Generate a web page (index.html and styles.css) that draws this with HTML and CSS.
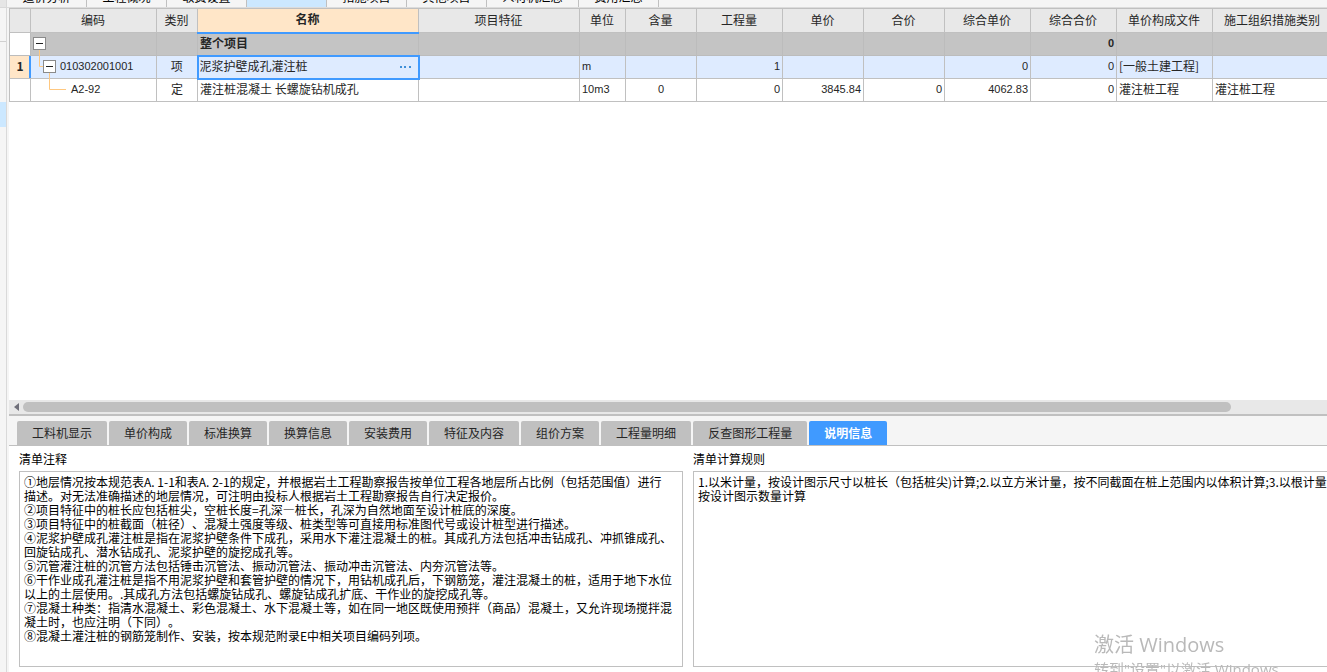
FILE: index.html
```html
<!DOCTYPE html>
<html lang="zh-CN">
<head>
<meta charset="utf-8">
<title>分部分项</title>
<link rel="stylesheet" href="styles.css">
</head>
<body>
<div class="app">
  <aside class="rail"><div class="rail-head"></div><div class="rail-top"></div><div class="rail-mid"></div><div class="rail-active"></div></aside>
  <main class="main">
    <nav class="modules">
      <button type="button">造价分析</button><button type="button">工程概况</button><button type="button">取费设置</button><button type="button" class="current" aria-label="分部分项"></button><button type="button">措施项目</button><button type="button">其他项目</button><button type="button">人材机汇总</button><button type="button">费用汇总</button>
    </nav>
    <section class="sheet">
      <table class="grid">
        <colgroup><col class="c-idx"><col class="c-code"><col class="c-kind"><col class="c-name"><col class="c-feat"><col class="c-unit"><col class="c-cont"><col class="c-86"><col class="c-81"><col class="c-81"><col class="c-86"><col class="c-86"><col class="c-file"><col class="c-org"></colgroup>
        <thead>
          <tr><th></th><th>编码</th><th>类别</th><th class="picked">名称</th><th>项目特征</th><th>单位</th><th>含量</th><th>工程量</th><th>单价</th><th>合价</th><th>综合单价</th><th>综合合价</th><th>单价构成文件</th><th>施工组织措施类别</th></tr>
        </thead>
        <tbody>
          <tr class="total">
            <td class="idx"></td>
            <td class="tree"><div class="node"><button type="button" class="toggle" aria-label="折叠整个项目"></button></div></td>
            <td></td><td>整个项目</td><td></td><td></td><td></td><td></td><td></td><td></td><td></td><td class="num">0</td><td></td><td></td>
          </tr>
          <tr class="selected">
            <td class="idx">1</td>
            <td class="tree"><div class="node level1"><svg class="branch" width="9" height="17" viewBox="0 0 9 17"><path d="M.5 0V16.500H4" /></svg><button type="button" class="toggle" aria-label="折叠清单"></button><span class="digits">010302001001</span></div></td>
            <td class="mid">项</td>
            <td class="edit"><div class="editor"><input type="text" aria-label="名称" value="泥浆护壁成孔灌注桩"><button type="button" class="more" aria-label="更多"><svg width="12" height="2" viewBox="0 0 12 2"><path d="M0 0h2v2H0zM4 0h2v2H4zM9 0h2v2H9z"/></svg></button></div></td>
            <td></td><td class="digits">m</td><td></td><td class="num">1</td><td></td><td></td><td class="num">0</td><td class="num">0</td><td>[一般土建工程]</td><td></td>
          </tr>
          <tr>
            <td class="idx"></td>
            <td class="tree"><div class="node level2"><svg class="branch" width="17" height="17" viewBox="0 0 17 17"><path d="M.5 0V16.500H17" /></svg><span class="digits">A2-92</span></div></td>
            <td class="mid">定</td><td>灌注桩混凝土 长螺旋钻机成孔</td><td></td><td class="digits">10m3</td><td class="digits mid">0</td><td class="num">0</td><td class="num">3845.84</td><td class="num">0</td><td class="num">4062.83</td><td class="num">0</td><td>灌注桩工程</td><td>灌注桩工程</td>
          </tr>
        </tbody>
      </table>
    </section>
    <div class="scroller"><svg width="5" height="8" viewBox="0 0 5 8"><path d="M5 0v8L0 4z"/></svg><div class="thumb"></div></div>
    <section class="detail">
      <nav class="tabs">
        <button type="button">工料机显示</button><button type="button">单价构成</button><button type="button">标准换算</button><button type="button">换算信息</button><button type="button">安装费用</button><button type="button">特征及内容</button><button type="button">组价方案</button><button type="button">工程量明细</button><button type="button">反查图形工程量</button><button type="button" class="current">说明信息</button>
      </nav>
      <div class="notes">
        <div class="note">
          <label for="note">清单注释</label>
          <textarea id="note" readonly wrap="off">①地层情况按本规范表A. 1-1和表A. 2-1的规定，并根据岩土工程勘察报告按单位工程各地层所占比例（包括范围值）进行
描述。对无法准确描述的地层情况，可注明由投标人根据岩土工程勘察报告自行决定报价。
②项目特征中的桩长应包括桩尖，空桩长度=孔深—桩长，孔深为自然地面至设计桩底的深度。
③项目特征中的桩截面（桩径）、混凝土强度等级、桩类型等可直接用标准图代号或设计桩型进行描述。
④泥浆护壁成孔灌注桩是指在泥浆护壁条件下成孔，采用水下灌注混凝土的桩。其成孔方法包括冲击钻成孔、冲抓锥成孔、
回旋钻成孔、潜水钻成孔、泥浆护壁的旋挖成孔等。
⑤沉管灌注桩的沉管方法包括锤击沉管法、振动沉管法、振动冲击沉管法、内夯沉管法等。
⑥干作业成孔灌注桩是指不用泥浆护壁和套管护壁的情况下，用钻机成孔后，下钢筋笼，灌注混凝土的桩，适用于地下水位
以上的土层使用。.其成孔方法包括螺旋钻成孔、螺旋钻成孔扩底、干作业的旋挖成孔等。
⑦混凝土种类：指清水混凝土、彩色混凝土、水下混凝土等，如在同一地区既使用预拌（商品）混凝土，又允许现场搅拌混
凝土时，也应注明（下同）。
⑧混凝土灌注桩的钢筋笼制作、安装，按本规范附录E中相关项目编码列项。</textarea>
        </div>
        <div class="note">
          <label for="rule">清单计算规则</label>
          <textarea id="rule" readonly wrap="off">1.以米计量，按设计图示尺寸以桩长（包括桩尖)计算;2.以立方米计量，按不同截面在桩上范围内以体积计算;3.以根计量，
按设计图示数量计算</textarea>
        </div>
      </div>
    </section>
  </main>
</div>
<div class="watermark"><p class="wm-title">激活 Windows</p><p class="wm-sub">转到"设置"以激活 Windows。</p></div>
</body>
</html>
```
FILE: styles.css
```css
* { box-sizing: border-box; }
body {
  margin: 0;
  overflow: hidden;
  background: #fff;
  color: #262626;
  font: 12px/14px "Noto Sans CJK SC", sans-serif;
  text-spacing-trim: space-all;
}
button, input, textarea { font: inherit; color: inherit; margin: 0; padding: 0; border: 0; background: none; border-radius: 0; }

.app { display: flex; height: 100vh; background: #f5f5f5; }
.rail { flex: 0 0 7px; display: flex; flex-direction: column; border-right: 1px solid #d9d9d9; }
.rail-head { height: 8px; background: #e6e6e6; border-bottom: 1px solid #d9d9d9; }
.rail-top { height: 34px; border-bottom: 1px solid #d0d0d0; }
.rail-mid { height: 60px; }
.rail-active { height: 25px; background: #cce8ff; }
.main { flex: 1; min-width: 0; display: flex; flex-direction: column; }

.modules { flex: none; height: 8px; display: flex; align-items: flex-end; overflow: hidden; border-bottom: 1px solid #dcdcdc; }
.modules button { flex: none; height: 20px; border-right: 1px solid #c0c0c0; line-height: 14px; width: 80px; white-space: nowrap; color: #000; }
.modules button:nth-child(7) { width: 92px; }
.modules .current { background: #cce8ff; }

.sheet { flex: 1; min-height: 0; margin-left: 2px; overflow: hidden; background: #fff; }
.grid { width: 1324px; table-layout: fixed; border-collapse: collapse; }
.c-idx { width: 21px; } .c-code { width: 126px; } .c-kind { width: 41px; } .c-name { width: 221px; }
.c-feat { width: 161px; } .c-unit { width: 46px; } .c-cont { width: 71px; }
.c-86 { width: 86px; } .c-81 { width: 81px; } .c-file { width: 96px; } .c-org { width: 120px; }
.grid th, .grid td { height: 23px; padding: 0 2px 2px; border: 1px solid #c0c0c0; white-space: nowrap; line-height: 14px; text-align: left; overflow: hidden; }
.grid th { height: 24px; background: #e8e8e8; font-weight: 400; text-align: center; padding: 0 1px 2px 0; }
.grid th.picked { background: #ffe6c8; font-weight: 700; border-bottom: 2px solid #409aff; }
.grid .total td { background: #c4c4c4; font-weight: 700; border-color: #bcbcbc; }
.grid .selected td { background: #deebff; }
.grid .total .idx { background: #fff; }
.grid .selected .idx { background: #ffe6c8; border-right-color: #409aff; box-shadow: inset -1px 0 #409aff; }
.grid .idx { text-align: center; font-weight: 700; }
.grid .mid { text-align: center; }
.grid .num { text-align: right; }
.grid .num, .digits { font-family: "Liberation Sans", sans-serif; font-size: 11px; }
.grid .tree { padding: 0 2px 2px; overflow: visible; }
.grid .edit { padding: 0; border: 2px solid #409aff; }
.editor { display: flex; align-items: center; padding: 0 6px 0 1px; }
.editor input { flex: 1; min-width: 0; height: 20px; padding-bottom: 3px; outline: none; }
.more { display: flex; }
.more svg { fill: #3f8fd8; }

.node { display: flex; align-items: center; position: relative; height: 19px; }
.level1 { padding-left: 10px; gap: 4px; }
.level2 { padding-left: 38px; }
.toggle { width: 13px; height: 13px; border: 1px solid #8a8a8a; background: #fff; display: flex; align-items: center; justify-content: center; }
.toggle::before { content: ""; width: 7px; height: 1px; background: #222; }
.branch { position: absolute; fill: none; stroke: #ffc880; }
.level1 .branch { left: 6px; top: -7px; }
.level2 .branch { left: 16px; top: -7px; }

.scroller { flex: none; height: 16px; margin-left: 2px; padding: 0 0 0 5px; display: flex; align-items: center; gap: 4px; background: #e8e8e8; border-bottom: 2px solid #c0c0c0; }
.scroller svg { fill: #70707a; }
.thumb { width: 92%; height: 10px; border-radius: 5px; background: #c0c0c0; }

.detail { flex: none; height: 256px; display: flex; flex-direction: column; margin-left: 2px; }
.tabs { flex: none; display: flex; gap: 2px; padding: 5px 0 0 8px; border-bottom: 1px solid #c0c0c0; }
.tabs button { flex: none; height: 24px; padding: 0 15px; background: #c0c0c0; border-radius: 2px 2px 0 0; white-space: nowrap; }
.tabs .current { background: #409aff; color: #fff; font-weight: 700; }
.notes { flex: 1; display: grid; grid-template-columns: repeat(2, calc(50% + 10px)); gap: 10px; padding: 6px 0 5px 10px; background: #fff; color: #000; overflow: hidden; }
.note { display: flex; flex-direction: column; gap: 5px; }
.note label { line-height: 14px; }
.note textarea { flex: 1; display: block; width: 100%; padding: 3px 4px; border: 1px solid #c0c0c0; resize: none; overflow: hidden; outline: none; line-height: 14px; }

.watermark { position: fixed; left: 1094px; top: 632px; color: #b9b9b9; pointer-events: none; font-family: "Open Sans", "Noto Sans CJK SC", sans-serif; white-space: nowrap; }
.watermark p { margin: 0; }
.wm-title { font-size: 20px; line-height: 26px; }
.wm-sub { font-size: 15px; line-height: 22px; }
```
